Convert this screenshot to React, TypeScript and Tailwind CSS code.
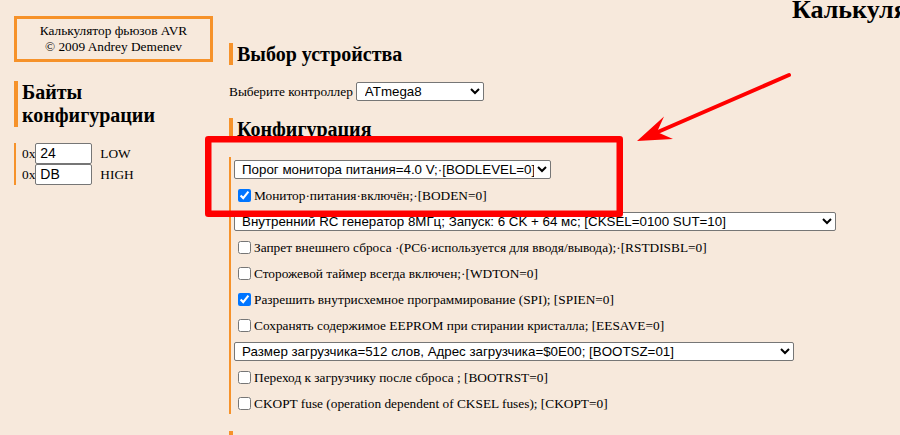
import React from 'react';

type FuseRow =
  | { kind: 'select'; width: string; value: string }
  | { kind: 'check'; label: string; checked: boolean };

// Строки блока "Конфигурация" в порядке отображения
const fuseRows: FuseRow[] = [
  { kind: 'select', width: 'w-[317px]', value: 'Порог монитора питания=4.0 V;·[BODLEVEL=0]' },
  { kind: 'check', label: 'Монитор·питания·включён;·[BODEN=0]', checked: true },
  { kind: 'select', width: 'w-[602px]', value: 'Внутренний RC генератор 8МГц; Запуск: 6 CK + 64 мс; [CKSEL=0100 SUT=10]' },
  { kind: 'check', label: 'Запрет внешнего сброса ·(PC6·используется для вводя/вывода);·[RSTDISBL=0]', checked: false },
  { kind: 'check', label: 'Сторожевой таймер всегда включен;·[WDTON=0]', checked: false },
  { kind: 'check', label: 'Разрешить внутрисхемное программирование (SPI); [SPIEN=0]', checked: true },
  { kind: 'check', label: 'Сохранять содержимое EEPROM при стирании кристалла; [EESAVE=0]', checked: false },
  { kind: 'select', width: 'w-[560px]', value: 'Размер загрузчика=512 слов, Адрес загрузчика=$0E00; [BOOTSZ=01]' },
  { kind: 'check', label: 'Переход к загрузчику после сброса ; [BOOTRST=0]', checked: false },
  { kind: 'check', label: 'CKOPT fuse (operation dependent of CKSEL fuses); [CKOPT=0]', checked: false },
];

const fuseBytes = [
  { value: '24', name: 'LOW' },
  { value: 'DB', name: 'HIGH' },
];

const selectCls =
  "h-[19px] bg-white border border-[#767676] rounded-[2px] pl-[3px] text-[13.33px] text-black font-['Liberation_Sans',Arial,sans-serif] leading-[17px]";

const Heading: React.FC<{ children: React.ReactNode; className?: string }> = ({ children, className = '' }) => (
  <h2 className={`border-l-4 border-[#f6922a] pl-[4px] text-[20px] font-bold text-black ${className}`}>{children}</h2>
);

export default function App() {
  return (
    <div className="relative w-[900px] h-[435px] overflow-hidden bg-[#f7e9dc] text-black font-['Liberation_Serif','Times_New_Roman',serif] text-[13.33px]">
      <div className="flex items-start">
        {/* Левая колонка */}
        <aside className="ml-[14px] mt-[16px] w-[199px] shrink-0">
          <div className="h-[46px] border-[3px] border-[#f6922a] flex flex-col justify-center items-center leading-[16px]">
            <span>Калькулятор фьюзов AVR</span>
            <span>© 2009 Andrey Demenev</span>
          </div>

          <Heading className="mt-[19px] leading-[23px]">
            Байты
            <br />
            конфигурации
          </Heading>

          <div className="mt-[16px] border-l-2 border-[#f6922a] pl-[6px]">
            {fuseBytes.map(b => (
              <div key={b.name} className="flex items-center h-[21px]">
                <span>0x</span>
                <input
                  defaultValue={b.value}
                  className="w-[57px] h-[21px] bg-white border border-[#767676] rounded-[2px] px-[4px] text-[14px] font-['Liberation_Sans',Arial,sans-serif] text-black"
                />
                <span className="ml-[8px]">{b.name}</span>
              </div>
            ))}
          </div>
        </aside>

        {/* Основная колонка */}
        <main className="ml-[16px] flex-1 min-w-0">
          <h1 className="-mt-[5px] h-[30px] pl-[563px] whitespace-nowrap text-[26px] leading-[30px] font-bold">
            Калькулятор фьюзов AVR
          </h1>

          <Heading className="mt-[18px] h-[22px] leading-[22px]">Выбор устройства</Heading>

          <div className="mt-[17px] h-[19px] flex items-center gap-[3px]">
            <span>Выберите контроллер</span>
            <select className={`${selectCls} w-[128px] pl-[4px]`} defaultValue="ATmega8">
              <option>ATmega8</option>
            </select>
          </div>

          <Heading className="mt-[17px] h-[22px] leading-[22px]">Конфигурация</Heading>

          <div className="mt-[17px] border-l-2 border-[#f6922a] pl-[3px] pt-[2.5px] flex flex-col gap-[5.5px]">
            {fuseRows.map((row, i) =>
              row.kind === 'select' ? (
                <div key={i} className="h-[20.5px] flex items-center">
                  <select className={`${selectCls} ${row.width}`} defaultValue={row.value}>
                    <option>{row.value}</option>
                  </select>
                </div>
              ) : (
                <label key={i} className="h-[20.5px] flex items-center">
                  <input type="checkbox" defaultChecked={row.checked} className="w-[13px] h-[13px] ml-[4px] mr-[3px]" />
                  <span>{row.label}</span>
                </label>
              )
            )}
          </div>

          <Heading className="mt-[17px] h-[22px] leading-[22px]">Результат</Heading>
        </main>
      </div>

      {/* Пометка красным поверх страницы */}
      <svg className="absolute inset-0 pointer-events-none" width="900" height="435" viewBox="0 0 900 435">
        <rect x="208.25" y="139.25" width="411.5" height="74.5" fill="none" stroke="#ff0000" strokeWidth="6.5" strokeLinejoin="round" />
        <line x1="789" y1="75" x2="652" y2="134.5" stroke="#ff0000" strokeWidth="4" strokeLinecap="round" />
        <polygon points="637,141 664,116.5 657,132 673,139" fill="#ff0000" />
      </svg>
    </div>
  );
}
